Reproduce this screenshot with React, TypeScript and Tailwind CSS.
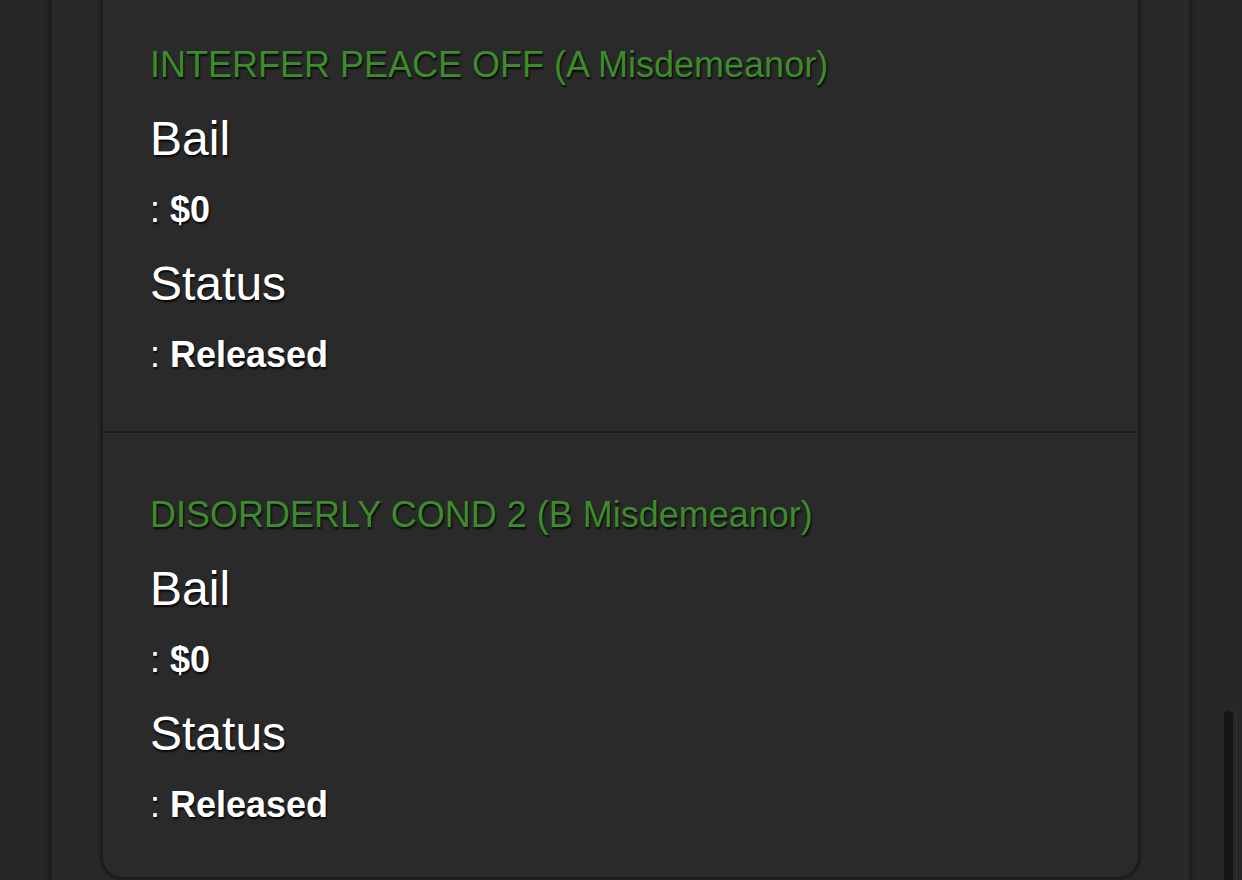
import React from 'react';

interface Charge {
  title: string;
  bail: string;
  status: string;
}

const charges: Charge[] = [
  { title: 'INTERFER PEACE OFF (A Misdemeanor)', bail: '$0', status: 'Released' },
  { title: 'DISORDERLY COND 2 (B Misdemeanor)', bail: '$0', status: 'Released' },
];

const shadow = '[text-shadow:1px_2px_2px_rgba(0,0,0,0.85)]';

const ChargeRow: React.FC<{ charge: Charge; last: boolean }> = ({ charge, last }) => (
  <div
    className={
      last
        ? 'px-[47px] pt-[60px] pb-[50px]'
        : 'px-[47px] pt-[58px] pb-[54px] border-b-2 border-[#1c1c1c] shadow-[0_1px_0_#303030]'
    }
  >
    <div className={`text-[36px] leading-[44px] text-[#3c8c2b] ${shadow}`}>{charge.title}</div>
    <div className={`mt-6 text-[48px] leading-[56px] text-white ${shadow}`}>Bail</div>
    <div className={`mt-[21px] text-[36px] leading-[44px] text-white ${shadow}`}>
      : <span className="font-bold">{charge.bail}</span>
    </div>
    <div className={`mt-6 text-[48px] leading-[56px] text-white ${shadow}`}>Status</div>
    <div className={`mt-[21px] text-[36px] leading-[44px] text-white ${shadow}`}>
      : <span className="font-bold">{charge.status}</span>
    </div>
  </div>
);

export default function App() {
  return (
    <div
      className="relative h-[880px] w-[1242px] overflow-hidden bg-[#272727]"
      style={{ fontFamily: '"Liberation Sans", Arial, sans-serif' }}
    >
      {/* content column */}
      <div className="ml-[50px] h-[940px] w-[1141px] border-x-2 border-[#1e1e1e] bg-[#292929] px-[49px] shadow-[0_0_4px_rgba(0,0,0,0.5)]">
        <div className="-mt-[17px] rounded-b-[22px] border-2 border-[#1c1c1c] bg-[#2a2a2a] shadow-[0_0_4px_rgba(0,0,0,0.5)]">
          {charges.map((c, i) => (
            <ChargeRow key={c.title} charge={c} last={i === charges.length - 1} />
          ))}
        </div>
      </div>

      {/* scrollbar thumb */}
      <div className="absolute left-[1224px] top-[711px] h-[180px] w-[9px] rounded-full bg-[#151515]" />
      <div className="absolute left-[1236px] top-[711px] h-[180px] w-px bg-[#2f2f2f]" />
    </div>
  );
}
